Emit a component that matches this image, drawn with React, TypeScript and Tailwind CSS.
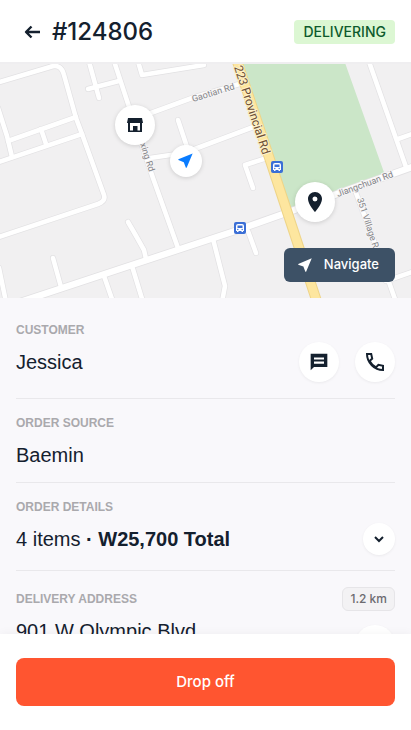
import type { ReactNode } from "react";
import { MdLocationOn, MdNearMe } from "react-icons/md";

const ORDER = {
  id: "#124806",
  status: "DELIVERING",
  customer: "Jessica",
  source: "Baemin",
  items: 4,
  total: "W25,700",
  address: "901 W Olympic Blvd",
  distance: "1.2 km",
};

const ROADS = [
  "M-4 83 L50 67 Q61 63 64 75 L76 118 L82 134 L104 195 Q106 201 98 204 L-4 238",
  "M-2 108 L7 136 L12 157",
  "M8 141 L76 117",
  "M-4 163 L82 134",
  "M41 129 L46 144",
  "M88 58 L99 98",
  "M88 89 L119 81",
  "M113 58 L135 125 L153 178 L178 248",
  "M137 58 L142 75 L204 65",
  "M140 117 L192 98 L246 82",
  "M178 120 L188 150",
  "M150 158 L184 153 L256 126",
  "M253 188 L245 165 L270 157",
  "M367 56 L406 167",
  "M398 139 L415 133",
  "M-1 268 L6 302",
  "M53 258 L61 287",
  "M128 222 L135 234 L144 250 L146 259",
  "M104 276 L113 302",
  "M132 266 L143 302",
  "M213 239 L225 286 L222 302",
  "M248 231 L256 253",
  "M355 190 L390 285 L396 302",
  "M415 271 L386 281",
];

const MAIN_ROAD = "M20 302 L135 264 L235 231 L300 208 L345 191 L415 166";
const HIGHWAY = "M236 58 L276 178 L317 302";

function BusStop({ x, y }: { x: number; y: number }) {
  return (
    <g transform={`translate(${x} ${y})`}>
      <rect x="-6" y="-6" width="12" height="12" rx="2" fill="#3b6fd6" />
      <path d="M-4 -2 Q-4 -4 -2 -4 H2 Q4 -4 4 -2 V3 H3 V4 H1.5 V3 H-1.5 V4 H-3 V3 H-4 Z" fill="#fff" />
      <path d="M-2.5 -2.5 H2.5 V0 H-2.5 Z" fill="#3b6fd6" />
      <circle cx="-2.2" cy="1.5" r="0.7" fill="#3b6fd6" />
      <circle cx="2.2" cy="1.5" r="0.7" fill="#3b6fd6" />
    </g>
  );
}

function RouteMap() {
  return (
    <svg
      viewBox="0 64 411 234"
      preserveAspectRatio="xMidYMid slice"
      className="block w-full font-[Roboto,sans-serif]"
      role="img"
      aria-label="Delivery route"
    >
      <rect x="0" y="64" width="411" height="234" fill="#f1f0f1" />
      <path d="M238 60 H344 L386 178 L345 192 L288 212 Z" fill="#cbe6c8" />
      <g fill="none" strokeLinecap="round" strokeLinejoin="round">
        {ROADS.map((d) => (
          <path key={d} d={d} stroke="#e2e1e3" strokeWidth="6" />
        ))}
        <path d={MAIN_ROAD} stroke="#e2e1e3" strokeWidth="8" />
        {ROADS.map((d) => (
          <path key={d} d={d} stroke="#fff" strokeWidth="4.6" />
        ))}
        <path d={MAIN_ROAD} stroke="#fff" strokeWidth="6.4" />
        <path d={HIGHWAY} stroke="#eed488" strokeWidth="10.5" />
        <path d={HIGHWAY} stroke="#fde69f" strokeWidth="8.5" />
      </g>

      <g fill="#838387" stroke="#f6f5f6" strokeWidth="2" paintOrder="stroke" fontSize="9">
        <text transform="translate(193 102) rotate(-17)">Gaotian Rd</text>
        <text transform="translate(140 144) rotate(72)">xing Rd</text>
        <text transform="translate(338 197) rotate(-20)">Jiangchuan Rd</text>
        <text transform="translate(357 199) rotate(72)">351 Village Rd</text>
      </g>
      <text
        transform="translate(234 67) rotate(72)"
        fontSize="12"
        fill="#6d4f35"
        stroke="#fdf0c8"
        strokeWidth="2"
        paintOrder="stroke"
      >
        223 Provincial Rd
      </text>
      <BusStop x={277} y={167} />
      <BusStop x={240} y={228} />

      <g className="drop-shadow-sm">
        <circle cx="135" cy="125" r="20" fill="#fff" />
        <circle cx="186" cy="161" r="16" fill="#fff" />
        <circle cx="315" cy="202" r="20" fill="#fff" />
      </g>
      <g fill="#14202e">
        <path d="M128 118 H142 L143 123 H127 Z" />
        <path fillRule="evenodd" d="M128 122 H142 V132 H128 Z M130 123 V130.500 H133 V126 H137.500 V130.500 H140 V123 Z" />
      </g>
      <MdNearMe x="176" y="151" size={19} color="#0a7cff" />
      <MdLocationOn x="303" y="190" size={24} color="#14202e" />
    </svg>
  );
}

function Label({ children }: { children: ReactNode }) {
  return <h2 className="text-xs leading-4 font-bold text-[#aaa9ad]">{children}</h2>;
}

function RoundButton({ label, small, children }: { label: string; small?: boolean; children: ReactNode }) {
  return (
    <button
      type="button"
      aria-label={label}
      className={`${small ? "size-8" : "size-10"} flex shrink-0 items-center justify-center rounded-full bg-white shadow-[0_1px_3px_rgba(0,0,0,0.06)]`}
    >
      {children}
    </button>
  );
}

export default function App() {
  return (
    <div className="flex h-dvh flex-col bg-white font-['Liberation_Sans',Arial,sans-serif] text-[#14202e]">
      <header className="flex shrink-0 items-center border-b-2 border-[#efeef0] bg-white px-4 pt-5 pb-[18px]">
        <button type="button" aria-label="Back" className="flex h-6 w-8 items-center justify-center">
          <svg viewBox="0 0 16 16" className="size-4" fill="none" stroke="currentColor" strokeWidth="2.4" strokeLinejoin="round">
            <path d="M16 8 H2 M7.500 2.500 L2 8 L7.500 13.500" />
          </svg>
        </button>
        <h1 className="ml-1 font-[Inter,sans-serif] text-2xl leading-6 font-medium">{ORDER.id}</h1>
        <span className="ml-auto rounded bg-[#dcf7d3] px-[9px] font-[Inter,sans-serif] text-sm leading-6 font-medium text-[#0d5a2c]">
          {ORDER.status}
        </span>
      </header>

      <main className="min-h-0 flex-1 overflow-y-auto bg-[#f9f8fb] [scrollbar-width:none]">
        <div className="relative">
          <RouteMap />
          <button
            type="button"
            className="absolute right-4 bottom-4 flex h-[34px] items-center gap-2.5 rounded-md bg-[#3d5166] pr-4 pl-3 font-[Inter,sans-serif] text-[13px] font-medium text-white"
          >
            <MdNearMe size={18} />
            Navigate
          </button>
        </div>

        <div className="px-4">
          <section className="border-b border-[#e9e8eb] pt-6 pb-4">
            <Label>CUSTOMER</Label>
            <div className="mt-1 flex items-center gap-4">
              <p className="flex-1 text-xl">{ORDER.customer}</p>
              <RoundButton label="Message customer">
                <svg viewBox="0 0 24 24" className="size-5" fill="currentColor" fillRule="evenodd">
                  <path d="M2 2 H22 V18 H6 L2 22 Z M6 6.500 V9 H18 V6.500 Z M6 11.500 V14 H18 V11.500 Z" />
                </svg>
              </RoundButton>
              <RoundButton label="Call customer">
                <svg viewBox="0 0 24 24" className="size-6" fill="none" stroke="currentColor" strokeWidth="2">
                  <path d="M4 4 H8.200 L9.200 8.600 L6.600 11 Q9 15.400 13 17.400 L15.400 14.800 L20 15.800 V20 Q13.500 20 8.800 15.200 Q4 10.500 4 4 Z" />
                </svg>
              </RoundButton>
            </div>
          </section>

          <section className="border-b border-[#e9e8eb] pt-4 pb-[11px]">
            <Label>ORDER SOURCE</Label>
            <p className="mt-2 text-xl leading-8">{ORDER.source}</p>
          </section>

          <section className="border-b border-[#e9e8eb] pt-4 pb-[15px]">
            <Label>ORDER DETAILS</Label>
            <div className="mt-2 flex items-center justify-between">
              <p className="text-xl">
                {ORDER.items} items <b>· {ORDER.total} Total</b>
              </p>
              <RoundButton label="Show order details" small>
                <svg viewBox="0 0 12 8" className="h-2 w-3" fill="none" stroke="currentColor" strokeWidth="2">
                  <path d="M2 2 L6 6 L10 2" />
                </svg>
              </RoundButton>
            </div>
          </section>

          <section className="pt-4 pb-6">
            <div className="flex items-center justify-between">
              <Label>DELIVERY ADDRESS</Label>
              <span className="rounded-md border border-[#e6e5e8] bg-[#f3f2f4] px-[7px] font-[Inter,sans-serif] text-xs leading-[22px] font-medium text-[#6c6b70]">
                {ORDER.distance}
              </span>
            </div>
            <div className="mt-1.5 flex min-h-14 items-center justify-between">
              <p className="self-start text-xl">{ORDER.address}</p>
              <RoundButton label="Open address">
                <MdNearMe size={20} />
              </RoundButton>
            </div>
          </section>
        </div>
      </main>

      <footer className="relative shrink-0 bg-white px-4 py-6 shadow-[0_-2px_8px_rgba(0,0,0,0.03)]">
        <button
          type="button"
          className="h-12 w-full rounded-lg bg-[#ff5530] font-[Inter,sans-serif] text-[15px] font-medium text-white"
        >
          Drop off
        </button>
      </footer>
    </div>
  );
}
